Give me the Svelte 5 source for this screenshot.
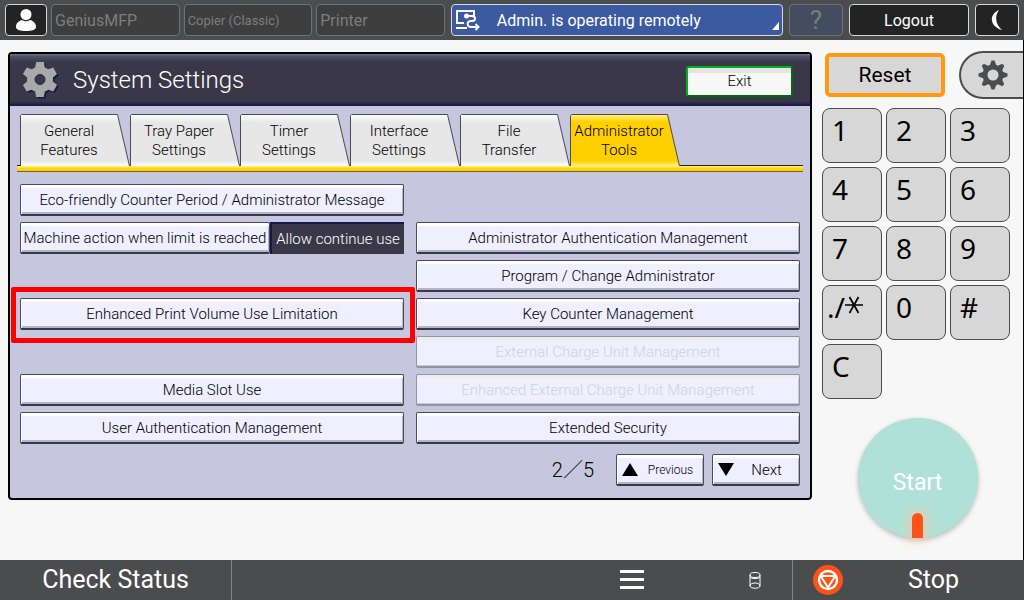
<script lang="ts">
	type Tab = { id: string; lines: string[] };
	type Setting = {
		label: string;
		value?: string;
		column: number;
		row: number;
		disabled?: boolean;
		marked?: boolean;
	};

	const apps = [
		{ name: 'GeniusMFP' },
		{ name: 'Copier (Classic)', small: true },
		{ name: 'Printer' }
	];

	const tabs: Tab[] = [
		{ id: 'general', lines: ['General', 'Features'] },
		{ id: 'tray', lines: ['Tray Paper', 'Settings'] },
		{ id: 'timer', lines: ['Timer', 'Settings'] },
		{ id: 'interface', lines: ['Interface', 'Settings'] },
		{ id: 'file', lines: ['File', 'Transfer'] },
		{ id: 'admin', lines: ['Administrator', 'Tools'] }
	];

	const settings: Setting[] = [
		{ label: 'Eco-friendly Counter Period / Administrator Message', column: 1, row: 1 },
		{ label: 'Machine action when limit is reached', value: 'Allow continue use', column: 1, row: 2 },
		{ label: 'Enhanced Print Volume Use Limitation', column: 1, row: 4, marked: true },
		{ label: 'Media Slot Use', column: 1, row: 6 },
		{ label: 'User Authentication Management', column: 1, row: 7 },
		{ label: 'Administrator Authentication Management', column: 2, row: 2 },
		{ label: 'Program / Change Administrator', column: 2, row: 3 },
		{ label: 'Key Counter Management', column: 2, row: 4 },
		{ label: 'External Charge Unit Management', column: 2, row: 5, disabled: true },
		{ label: 'Enhanced External Charge Unit Management', column: 2, row: 6, disabled: true },
		{ label: 'Extended Security', column: 2, row: 7 }
	];

	const keys = ['1', '2', '3', '4', '5', '6', '7', '8', '9', './*', '0', '#', 'C'];

	let activeTab = $state('admin');
	let page = $state(2);
	const pageCount = 5;
</script>

<div class="screen">
	<header class="topbar">
		<div class="topbar__apps">
			<button class="chip chip--dark chip--user" aria-label="User">
				<svg width="22" height="24" viewBox="0 0 22 24" fill="#fff">
					<circle cx="11" cy="6.5" r="5.5" />
					<path d="M1 19c0-4 3-6.500 6-7 2.500 1.600 5.500 1.600 8 0 3 .5 6 3 6 7 0 3-5 4-10 4S1 22 1 19z" />
				</svg>
			</button>
			{#each apps as app (app.name)}
				<button class="chip chip--app" class:chip--small={app.small} disabled>{app.name}</button>
			{/each}
		</div>
		<button class="chip chip--remote">
			<svg width="26" height="22" viewBox="0 0 26 22" fill="none" stroke="#fff" stroke-width="2">
				<path d="M9 14H2V2h17v6" />
				<path d="M1 19h11" />
				<circle cx="11.500" cy="7" r="2.500" fill="#fff" stroke="none" />
				<path d="M12 7h5c4 0 4 5 0 5h-1c-5 0-4 6 0 6h7" />
				<path d="M20.500 15l3 3-3 3" />
			</svg>
			<span>Admin. is operating remotely</span>
			<i class="chip__corner"></i>
		</button>
		<button class="chip chip--help" disabled>?</button>
		<button class="chip chip--dark chip--logout">Logout</button>
		<button class="chip chip--dark chip--sleep" aria-label="Sleep">
			<svg width="14" height="22" viewBox="0 0 14 22" fill="#fff">
				<path d="M9 1C-1 5-1 17 12 21 6 16 4 8 9 1z" />
			</svg>
		</button>
	</header>

	<div class="body">
		<main class="panel">
			<div class="panel__head">
				<svg width="37" height="38" viewBox="0 0 37 38">
					<g fill="#14184a" transform="translate(19.500 20)">
						<circle r="13" />
						{#each [0, 60, 120, 180, 240, 300] as angle}
							<path d="M-5-11l1.200-6.500h7.600L5-11z" transform="rotate({angle})" />
						{/each}
					</g>
					<g fill="#a9a9a9" transform="translate(18 18.500)">
						<circle r="13" />
						{#each [0, 60, 120, 180, 240, 300] as angle}
							<path d="M-5-11l1.200-6.500h7.600L5-11z" transform="rotate({angle})" />
						{/each}
					</g>
					<circle cx="18" cy="18.500" r="5" fill="#3a3848" stroke="#24244c" stroke-width="1" />
				</svg>
				<h1>System Settings</h1>
				<button class="exit">Exit</button>
			</div>

			<nav class="tabs">
				{#each tabs as tab (tab.id)}
					<button class="tab" class:tab--active={tab.id === activeTab} onclick={() => (activeTab = tab.id)}>
						<svg width="110" height="52" viewBox="0 0 110 52">
							<defs>
								<linearGradient id="tab-{tab.id}" x2="0" y2="1">
									{#if tab.id === activeTab}
										<stop offset="0" stop-color="#fff27a" />
										<stop offset=".15" stop-color="#ffcf00" />
										<stop offset=".9" stop-color="#ffcf00" />
										<stop offset="1" stop-color="#fff27a" />
									{:else}
										<stop offset="0" stop-color="#fff" />
										<stop offset=".16" stop-color="#e7e7e7" />
										<stop offset=".9" stop-color="#e7e7e7" />
										<stop offset="1" stop-color="#fff" />
									{/if}
								</linearGradient>
							</defs>
							<path d="M.5 52V1.500L1.500.5H97.500L109.500 52" fill="url(#tab-{tab.id})" stroke="#4a4a52" />
						</svg>
						<span>{tab.lines[0]}<br />{tab.lines[1]}</span>
					</button>
				{/each}
			</nav>
			<div class="tabline"></div>

			<div class="settings">
				{#each settings as item (item.label)}
					<div class="cell" class:cell--marked={item.marked} style="grid-area: {item.row} / {item.column}">
						<button class="key" disabled={item.disabled}>{item.label}</button>
						{#if item.value}
							<output class="value">{item.value}</output>
						{/if}
					</div>
				{/each}
			</div>

			<div class="pager">
				<span class="pager__count">{page}／{pageCount}</span>
				<button class="key pager__button" onclick={() => (page = Math.max(1, page - 1))}>
					<svg width="16" height="13" viewBox="0 0 16 13"><path d="M8 0l8 13H0z" /></svg>
					<span class="pager__small">Previous</span>
				</button>
				<button class="key pager__button" onclick={() => (page = Math.min(pageCount, page + 1))}>
					<svg width="16" height="13" viewBox="0 0 16 13"><path d="M0 0h16L8 13z" /></svg>
					<span>Next</span>
				</button>
			</div>
		</main>

		<aside class="side">
			<div class="side__top">
				<button class="reset">Reset</button>
				<button class="gear" aria-label="Settings">
					<svg width="30" height="30" viewBox="-15 -15 30 30">
						<circle r="8" fill="none" stroke="#4b4c4d" stroke-width="5" />
						{#each [0, 45, 90, 135, 180, 225, 270, 315] as angle}
							<path d="M-3.500-9l2-5.500h3l2 5.500z" fill="#4b4c4d" transform="rotate({angle})" />
						{/each}
					</svg>
				</button>
			</div>
			<div class="keypad">
				{#each keys as key (key)}
					<button class:wide={key.length > 1}>
						{#if key === './*'}
							./<svg width="18" height="18" viewBox="-9 -9 18 18" stroke="#000" stroke-width="1.700">
								<path d="M-9 0H9M-4.500-8l9 16M4.500-8l-9 16" />
							</svg>
						{:else}
							{key}
						{/if}
					</button>
				{/each}
			</div>
			<button class="start">
				<span>Start</span>
				<i class="start__lamp"></i>
			</button>
		</aside>
	</div>

	<footer class="bottombar">
		<button class="bottombar__status">Check Status</button>
		<div class="bottombar__middle">
			<button aria-label="Menu">
				<svg width="24" height="20" viewBox="0 0 24 20" stroke="#fff" stroke-width="3">
					<path d="M0 1.500h24M0 9.500h24M0 17.500h24" />
				</svg>
			</button>
			<svg width="12" height="17" viewBox="0 0 12 17" fill="none" stroke="#fff">
				<ellipse cx="6" cy="3" rx="5" ry="2.500" />
				<path d="M1 3v11c0 3 10 3 10 0V3M1 5c0 2 10 2 10 0M1 14c0-4 10-4 10 0" />
			</svg>
		</div>
		<button class="bottombar__stop">
			<svg width="30" height="30" viewBox="0 0 30 30">
				<circle cx="15" cy="15" r="15" fill="#ff5219" />
				<g fill="none" stroke="#fff">
					<circle cx="15" cy="15" r="9" stroke-width="2.400" />
					<path d="M7.800 11h14.400L15 22.500z" stroke-width="2" stroke-linejoin="round" />
				</g>
			</svg>
			<span>Stop</span>
		</button>
	</footer>
</div>

<style>
	:global(body) {
		margin: 0;
		background: #f7f7f7;
	}

	.screen {
		display: flex;
		flex-direction: column;
		min-height: 100vh;
		font-family: Roboto, 'Noto Sans', sans-serif;
		color: #000;
	}

	button {
		font: inherit;
		color: inherit;
		margin: 0;
		padding: 0;
		box-sizing: border-box;
		cursor: pointer;
	}

	svg {
		display: block;
		flex: none;
	}

	/* top bar */
	.topbar {
		display: flex;
		gap: 6px;
		padding: 4px 5px;
		background: #4b4c4d;
	}

	.topbar__apps {
		display: flex;
		flex: 441 1 0;
		gap: 4px;
	}

	.chip {
		display: flex;
		align-items: center;
		justify-content: center;
		height: 32px;
		border: 1px solid #d8d8d8;
		border-radius: 4px;
		font-size: 16px;
		white-space: nowrap;
	}

	.chip--dark {
		background: #232323;
		color: #fff;
	}

	.chip--user {
		width: 42px;
	}

	.chip--app {
		flex: 1 1 0;
		justify-content: flex-start;
		padding-left: 3px;
		background: #3e3e3e;
		border-color: #707172;
		color: #7c7d7e;
	}

	.chip--small {
		font-size: 13px;
	}

	.chip--remote {
		position: relative;
		flex: 328 1 0;
		justify-content: flex-start;
		gap: 16px;
		padding-left: 3px;
		background: #3c5a9f;
		color: #fff;
	}

	.chip__corner {
		position: absolute;
		right: 3px;
		bottom: 5px;
		border-left: 7px solid transparent;
		border-bottom: 8px solid #fff;
	}

	.chip--help {
		width: 54px;
		background: #444c5f;
		border-color: #6c7078;
		color: #7c7d7e;
		font-size: 26px;
	}

	.chip--logout {
		width: 120px;
	}

	.chip--sleep {
		width: 44px;
	}

	/* settings panel */
	.body {
		display: flex;
		flex: 1;
		align-items: flex-start;
		padding: 11px 0 0 8px;
		border-right: 1px solid #000;
	}

	.panel {
		flex: 1;
		margin-top: 1px;
		border: 2px solid #000;
		border-radius: 4px;
		background: #c6c6de;
		box-sizing: border-box;
		padding-bottom: 12px;
		overflow: hidden;
		font-weight: 300;
		font-size: 15px;
	}

	.panel__head {
		display: flex;
		align-items: center;
		gap: 14px;
		height: 52px;
		box-sizing: border-box;
		padding: 0 17px 0 12px;
		background: linear-gradient(#77758a 0, #55536a 2px, #3a3848 8px, #3a3848 47px, #14184a 52px);
	}

	h1 {
		flex: 1;
		margin: 0;
		color: #fff;
		font-size: 24px;
		font-weight: 300;
	}

	.exit {
		width: 107px;
		height: 31px;
		margin-top: 2px;
		border: 2px solid;
		border-color: #00b020 #006a10 #006a10 #00b020;
		border-radius: 3px;
		background: linear-gradient(#e4e4e4 5px, #f7f7f7 5px);
	}

	.tabs {
		display: flex;
		padding: 8px 10px 0;
	}

	.tab {
		display: grid;
		width: 110px;
		border: 0;
		background: none;
		line-height: 19px;
	}

	.tab--active {
		position: relative;
		z-index: 1;
	}

	.tab svg,
	.tab span {
		grid-area: 1 / 1;
	}

	.tab span {
		padding: 8px 12px 0 0;
	}

	.tabline {
		height: 7px;
		margin: -1px 7px 0;
		box-sizing: border-box;
		border-top: 1px solid #222;
		border-bottom: 1px solid #6b6330;
		background: linear-gradient(#fff27a, #ffcf00 3px);
	}

	.settings {
		display: grid;
		grid-template-columns: 1fr 1fr;
		grid-template-rows: repeat(7, 32px);
		gap: 6px 12px;
		padding: 12px 10px 0;
	}

	.cell {
		display: flex;
		min-width: 0;
	}

	.cell--marked {
		position: relative;
		z-index: 1;
	}

	.cell--marked::after {
		content: '';
		position: absolute;
		inset: -11px -11px -13px -9px;
		border: 5px solid #f00;
		border-radius: 2px;
		pointer-events: none;
	}

	.key {
		flex: 1 1 0;
		min-width: 0;
		height: 32px;
		border: 1px solid #4a4862;
		border-bottom: 2px solid #3a3850;
		border-radius: 2px;
		background: #efefff;
		box-shadow: inset 0 3px #fff, inset 1px 0 #fff, inset -1px -2px #b5b5bd;
		white-space: nowrap;
	}

	.key:disabled {
		border-color: #9494a0;
		box-shadow: inset 0 3px #ececf0, inset -1px -1px #c8c8d0;
		color: #d2d2da;
	}

	.value {
		display: flex;
		align-items: center;
		justify-content: center;
		flex: none;
		width: 134px;
		box-sizing: border-box;
		border-top: 2px solid #14184a;
		border-left: 2px solid #14184a;
		background: #3a3848;
		color: #fff;
		white-space: nowrap;
	}

	.pager {
		display: flex;
		justify-content: flex-end;
		align-items: center;
		gap: 8px;
		padding: 10px 10px 0;
	}

	.pager__count {
		margin-right: 14px;
		font-size: 20px;
		font-family: Roboto, 'Noto Sans CJK JP', sans-serif;
		line-height: 32px;
	}

	.pager__button {
		display: flex;
		flex: none;
		align-items: center;
		width: 88px;
		padding-left: 5px;
	}

	.pager__button span {
		flex: 1;
	}

	.pager__button .pager__small {
		font-size: 12px;
	}

	/* hard keys */
	.side {
		display: flex;
		flex-direction: column;
		width: 211px;
	}

	.side__top {
		display: flex;
		align-items: center;
		gap: 14px;
		padding-left: 13px;
	}

	.reset {
		width: 120px;
		height: 44px;
		border: 4px solid #ff9a10;
		border-radius: 5px;
		background: #d7d7d7;
		font-size: 21px;
	}

	.gear {
		display: flex;
		flex: 1;
		align-items: center;
		height: 48px;
		padding-left: 17px;
		border: 2px solid #4b4c4d;
		border-right: 0;
		border-radius: 24px 0 0 24px;
		background: #d7d7d7;
	}

	.keypad {
		display: grid;
		grid-template-columns: repeat(3, 60px);
		grid-auto-rows: 55px;
		gap: 4px;
		padding: 9px 0 0 10px;
	}

	.keypad button {
		display: flex;
		padding: 4px 0 0 9px;
		border: 1px solid #4b4c4d;
		border-radius: 8px;
		background: #d7d7d7;
		font-family: 'Noto Sans', sans-serif;
		font-size: 28px;
		line-height: 34px;
	}

	.keypad button.wide {
		padding-left: 4px;
	}

	.wide svg {
		margin-top: 6px;
	}

	.start {
		display: flex;
		flex-direction: column;
		align-items: center;
		align-self: center;
		width: 120px;
		height: 120px;
		margin-top: 19px;
		padding-top: 50px;
		border: 0;
		border-radius: 50%;
		background: #b0e1d6;
		box-shadow: 0 2px 5px rgba(0, 0, 0, 0.25);
		color: #fff;
		font-size: 23px;
		line-height: 30px;
	}

	.start__lamp {
		width: 11px;
		height: 25px;
		margin-top: 15px;
		border-radius: 6px 6px 0 0;
		background: #ff5219;
		box-shadow: 0 0 10px 4px rgba(255, 200, 170, 0.6);
	}

	/* bottom bar */
	.bottombar {
		display: flex;
		height: 40px;
		background: #4b4c4d;
		color: #fff;
	}

	.bottombar button {
		border: 0;
		background: none;
		font-size: 25px;
		line-height: 40px;
	}

	.bottombar .bottombar__status {
		width: 232px;
		border-right: 1px solid #838485;
	}

	.bottombar__middle {
		display: flex;
		flex: 1;
		align-items: center;
		justify-content: flex-end;
		gap: 105px;
		padding-right: 31px;
	}

	.bottombar .bottombar__stop {
		display: flex;
		align-items: center;
		width: 232px;
		padding-left: 20px;
		border-left: 1px solid #838485;
	}

	.bottombar__stop span {
		flex: 1;
	}
</style>
